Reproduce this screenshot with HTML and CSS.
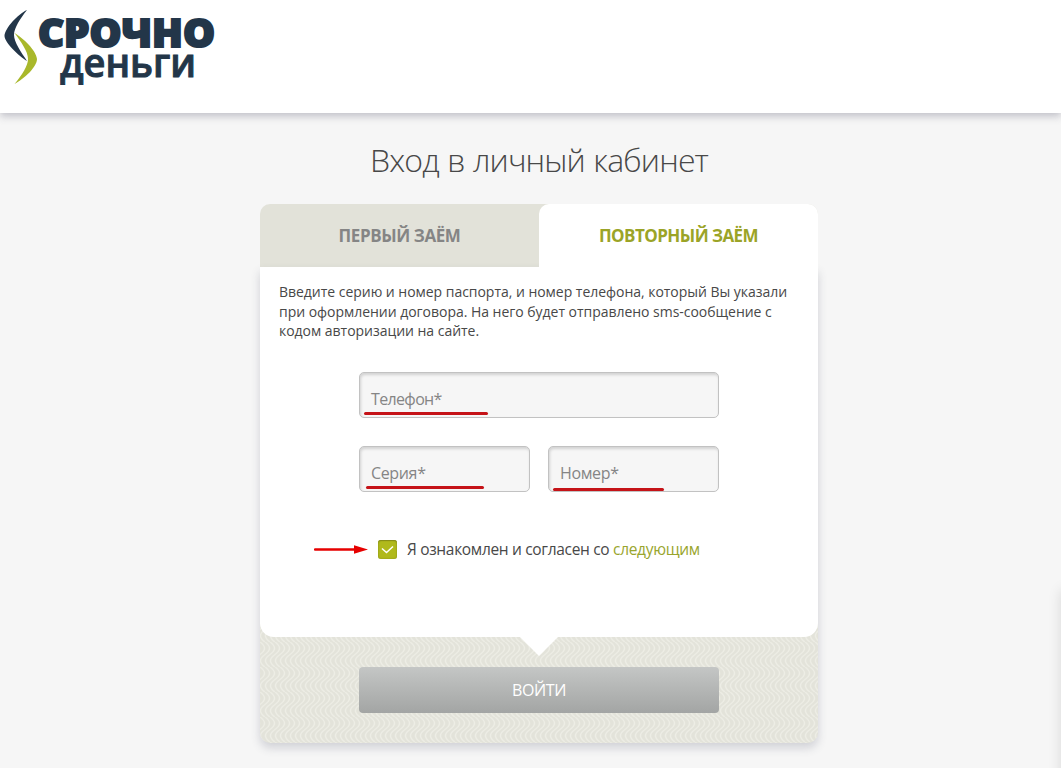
FILE: index.html
```html
<!DOCTYPE html>
<html lang="ru">
<head>
  <meta charset="UTF-8" />
  <meta name="viewport" content="width=device-width, initial-scale=1.0"/>
  <title>СРОЧНОДЕНЬГИ - Вход в личный кабинет</title>
  <link rel="stylesheet" href="styles.css">
</head>
<body>

  <header class="header">
    <a href="#" class="logo">
      <svg width="222" height="92" viewBox="0 0 222 92">
        <path class="logo-dark" d="M27 10 C20 19 14 28 14 35 C14 42 21 52 27 61 C19 56 5 43 4.500 36 C5 28 18 14 27 10 Z"/>
        <path class="logo-green" d="M14.500 33 C23 38 36 50 37 59 C37 67 24 79 14.500 84 C22 75 28 66 28 59 C28 51 21 42 14.500 33 Z"/>
        <text class="logo-top" x="38" y="47" textLength="177" lengthAdjust="spacingAndGlyphs">СРОЧНО</text>
        <text class="logo-bottom" x="60" y="77" textLength="136" lengthAdjust="spacingAndGlyphs">деньги</text>
      </svg>
    </a>
  </header>

  <main class="page">
    <h1 class="title">Вход в личный кабинет</h1>

    <div class="login">
      <div class="tabs">
        <a href="#" class="tab tab-first">ПЕРВЫЙ ЗАЁМ</a>
        <a href="#" class="tab tab-active">ПОВТОРНЫЙ ЗАЁМ</a>
      </div>

      <form class="card" id="loginForm">
        <div class="card-body">
          <p class="intro">
            Введите серию и номер паспорта, и номер телефона, который Вы указали<br>
            при оформлении договора. На него будет отправлено sms-сообщение с<br>
            кодом авторизации на сайте.
          </p>

          <div class="fields">
            <label class="field field-wide">
              <span>Телефон*</span>
              <i class="mark mark-phone"></i>
            </label>
            <label class="field">
              <span>Серия*</span>
              <i class="mark mark-series"></i>
            </label>
            <label class="field">
              <span>Номер*</span>
              <i class="mark mark-number"></i>
            </label>
          </div>

          <div class="agree">
            <svg class="arrow" width="54" height="10" viewBox="0 0 54 10">
              <path d="M1 5.500 H42" stroke="#e60000" stroke-width="2.4" stroke-linecap="round"/>
              <path d="M40 1.300 L54 5.500 L40 9.700 Z" fill="#e60000"/>
            </svg>
            <span class="checkbox">
              <svg width="19" height="19" viewBox="0 0 19 19">
                <path d="M4 8.500 L8.500 12.500 L15 6.500" fill="none" stroke="#fff" stroke-width="1.5"/>
              </svg>
            </span>
            <span class="agree-text">Я ознакомлен и согласен со <a href="#">следующим</a></span>
          </div>
        </div>

        <div class="card-footer">
          <button type="submit" class="btn">ВОЙТИ</button>
        </div>
      </form>
    </div>
  </main>

  <div class="side-shadow"></div>

</body>
</html>
```

FILE: styles.css
```css
* {
  box-sizing: border-box;
}

body {
  margin: 0;
  height: 768px;
  overflow: hidden;
  background: #f6f6f6;
  color: #484848;
  font-family: "Open Sans", "Noto Sans", sans-serif;
}

a {
  color: #99a52d;
  text-decoration: none;
}

.header {
  height: 113px;
  background: #fff;
  box-shadow: 0 3px 8px rgba(70, 73, 95, 0.32);
}

.logo {
  display: block;
  width: 222px;
}

.logo svg {
  display: block;
}

.logo-dark,
.logo-top,
.logo-bottom {
  fill: #233649;
}

.logo-green {
  fill: #a9b82b;
}

.logo-top {
  font-size: 38px;
  font-weight: 800;
  stroke: #233649;
  stroke-width: 2;
}

.logo-bottom {
  font-size: 40px;
  font-weight: 600;
  stroke: #233649;
  stroke-width: 1;
}

.page {
  width: 558px;
  margin-left: 260px;
}

.title {
  margin: 0;
  padding-top: 24px;
  height: 91px;
  font-size: 32px;
  line-height: 46px;
  font-weight: 300;
  letter-spacing: -0.85px;
  word-spacing: 1px;
  text-align: center;
  white-space: nowrap;
}

.tabs {
  display: flex;
  height: 63px;
  border-radius: 10px 10px 0 0;
  background: #e2e2d9;
}

.tab {
  position: relative;
  z-index: 1;
  flex: 1;
  font-size: 17px;
  line-height: 63px;
  font-weight: 700;
  letter-spacing: -0.4px;
  text-align: center;
}

.tab-first {
  color: #858585;
}

.tab-active {
  background: #fff;
  border-radius: 10px 10px 0 0;
  color: #9ba427;
  letter-spacing: -0.55px;
}

.card {
  margin: 0;
  border-radius: 0 0 10px 10px;
  background: #e3e3da url("data:image/svg+xml,%3Csvg xmlns='http://www.w3.org/2000/svg' width='5' height='25'%3E%3Cpath d='M-5 0 Q4 6.25 -5 12.5 Q-14 18.75 -5 25 M0 0 Q9 6.25 0 12.5 Q-9 18.75 0 25 M5 0 Q14 6.25 5 12.5 Q-4 18.75 5 25 M10 0 Q19 6.25 10 12.5 Q1 18.75 10 25' fill='none' stroke='%23ededE5' stroke-width='1.4'/%3E%3C/svg%3E");
  box-shadow: 0 5px 10px rgba(60, 65, 90, 0.2);
}

.card-body {
  position: relative;
  height: 370px;
  padding: 15px 19px 0;
  background: #fff;
  border-radius: 0 0 14px 14px;
}

.card-body::after {
  content: "";
  position: absolute;
  left: 260px;
  top: 370px;
  border: 19px solid transparent;
  border-top-color: #fff;
  border-bottom: 0;
}

.intro {
  margin: 0;
  height: 60px;
  font-size: 14px;
  line-height: 19.5px;
  letter-spacing: -0.03px;
  white-space: nowrap;
}

.fields {
  display: grid;
  grid-template-columns: 171px 171px;
  gap: 28px 18px;
  width: 360px;
  margin: 30px 0 0 80px;
}

.field {
  position: relative;
  height: 46px;
  padding-left: 11px;
  border: 1px solid #c2c2c2;
  border-radius: 5px;
  background: #f6f6f6;
  box-shadow: inset 1px 2px 3px rgba(0, 0, 0, 0.15);
  color: #858585;
  font-size: 16px;
  line-height: 52px;
  letter-spacing: -0.35px;
}

.field-wide {
  grid-column: 1 / 3;
  letter-spacing: -0.65px;
}

/* red underlines over the required fields */
.mark {
  position: absolute;
  height: 3px;
  border-radius: 2px;
  background: #c51318;
}

.mark-phone {
  left: 4px;
  top: 39px;
  width: 124px;
}

.mark-series {
  left: 6px;
  top: 39px;
  width: 118px;
}

.mark-number {
  left: 4px;
  top: 41px;
  width: 111px;
}

.agree {
  display: flex;
  align-items: center;
  height: 24px;
  margin: 45px 0 0 35px;
  white-space: nowrap;
}

.arrow {
  flex: none;
}

.checkbox {
  flex: none;
  width: 19px;
  height: 19px;
  margin: 0 10px;
  border-radius: 3px;
  background: #b0b91b;
  box-shadow: inset 0 1px 1px #858c18, inset 0 0 2px #858c18;
}

.checkbox svg {
  display: block;
}

.agree-text {
  font-size: 15.5px;
  line-height: 24px;
  letter-spacing: -0.32px;
}

.card-footer {
  height: 106px;
  padding: 30px 99px 0;
}

.btn {
  display: block;
  width: 360px;
  height: 46px;
  padding: 0;
  border: 0;
  border-radius: 4px;
  background: linear-gradient(#c4c6c5, #a3a5a4);
  color: #fff;
  font-family: inherit;
  font-size: 16px;
  letter-spacing: -0.4px;
  cursor: pointer;
}

.side-shadow {
  position: absolute;
  left: 1061px;
  top: 590px;
  width: 20px;
  height: 200px;
  box-shadow: 0 0 14px rgba(0, 0, 0, 0.12);
}
```
